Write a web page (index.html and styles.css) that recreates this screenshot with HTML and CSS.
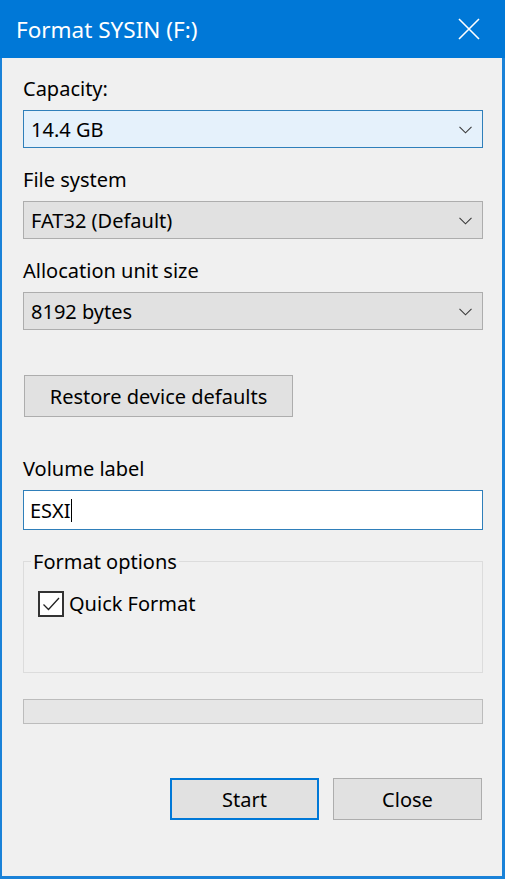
FILE: index.html
```html
<!DOCTYPE html>
<html>
<head>
<meta charset="utf-8">
<link rel="stylesheet" href="styles.css">
</head>
<body>
<div class="window">
  <div class="titlebar">
    <span class="title">Format SYSIN (F:)</span>
    <svg class="close-x" width="22" height="22" viewBox="0 0 22 22"><path d="M1 1 L21 21 M21 1 L1 21" stroke="#fff" stroke-width="1.6" fill="none"/></svg>
  </div>
  <div class="content">
    <div class="field">
      <div class="label">Capacity:</div>
      <div class="combo combo-hot"><span>14.4 GB</span><svg class="chev" width="13" height="8" viewBox="0 0 13 8"><path d="M0.5 0.8 L6.5 6.8 L12.5 0.8" stroke="#3a3a3a" stroke-width="1.1" fill="none"/></svg></div>
    </div>
    <div class="field">
      <div class="label">File system</div>
      <div class="combo"><span>FAT32 (Default)</span><svg class="chev" width="13" height="8" viewBox="0 0 13 8"><path d="M0.5 0.8 L6.5 6.8 L12.5 0.8" stroke="#3a3a3a" stroke-width="1.1" fill="none"/></svg></div>
    </div>
    <div class="field">
      <div class="label">Allocation unit size</div>
      <div class="combo"><span>8192 bytes</span><svg class="chev" width="13" height="8" viewBox="0 0 13 8"><path d="M0.5 0.8 L6.5 6.8 L12.5 0.8" stroke="#3a3a3a" stroke-width="1.1" fill="none"/></svg></div>
    </div>
    <button class="btn restore">Restore device defaults</button>
    <div class="field volume">
      <div class="label">Volume label</div>
      <div class="textbox"><span>ESXI</span><span class="caret"></span></div>
    </div>
    <fieldset class="group">
      <legend>Format options</legend>
      <div class="check">
        <span class="box"><svg width="22" height="22" viewBox="0 0 22 22"><path d="M3.5 11.5 L8.5 16.5 L19 5" stroke="#222" stroke-width="1.3" fill="none"/></svg></span>
        <span>Quick Format</span>
      </div>
    </fieldset>
    <div class="progress"></div>
    <div class="actions">
      <button class="btn primary">Start</button>
      <button class="btn">Close</button>
    </div>
  </div>
</div>
</body>
</html>
```
FILE: styles.css
```css
* { box-sizing: border-box; }
html, body { margin: 0; padding: 0; }
body {
  width: 505px;
  height: 879px;
  font-family: "Noto Sans", "Open Sans", sans-serif;
  font-size: 20px;
  color: #000;
  background: #0078d7;
  overflow: hidden;
}
.window {
  width: 505px;
  height: 879px;
  display: flex;
  flex-direction: column;
}
.titlebar {
  height: 58px;
  flex: none;
  background: #0078d7;
  display: flex;
  align-items: center;
  justify-content: space-between;
  padding: 0 25px 0 16px;
  color: #fff;
}
.title {
  font-size: 22.5px;
  line-height: 30px;
  margin-top: 2px;
}
.close-x { display: block; margin-top: 0px; }
.content {
  flex: 1;
  background: #f0f0f0;
  border-left: 2px solid #1a82d8;
  border-right: 3px solid #1a82d8;
  border-bottom: 3px solid #1a82d8;
  padding: 17px 19px 0 21px;
  display: flex;
  flex-direction: column;
}
.field { display: flex; flex-direction: column; }
.field + .field { margin-top: 18px; }
.label {
  line-height: 27px;
  height: 27px;
  margin-bottom: 8px;
}
.combo {
  height: 38px;
  border: 1px solid #adadad;
  background: #e1e1e1;
  display: flex;
  align-items: center;
  justify-content: space-between;
  padding: 0 10px 0 7px;
  line-height: 27px;
}
.combo-hot {
  background: #e5f1fb;
  border-color: #2f7fba;
}
.chev { display: block; margin-top: 1px; }
.btn {
  font-family: inherit;
  font-size: 20px;
  color: #000;
  background: #e1e1e1;
  border: 1px solid #adadad;
  padding: 0;
  margin: 0;
  line-height: 27px;
}
.restore {
  align-self: flex-start;
  margin-top: 45px;
  margin-left: 1px;
  width: 269px;
  height: 42px;
}
.field.volume { margin-top: 38px; }
.textbox {
  height: 40px;
  border: 1px solid #2f7fba;
  background: #fff;
  display: flex;
  align-items: center;
  padding: 0 0 0 6px;
  line-height: 27px;
}
.caret {
  display: block;
  width: 1px;
  height: 23px;
  background: #000;
  margin-left: 0px;
}
.group {
  margin: 18px 0 0 0;
  padding: 15px 14px 55px 14px;
  border: 1px solid #dcdcdc;
  min-width: 0;
}
.group legend {
  padding: 0 2px;
  margin-left: -7px;
  line-height: 27px;
}
.check {
  display: flex;
  align-items: center;
  height: 27px;
}
.box {
  width: 26px;
  height: 26px;
  border: 2px solid #333;
  background: #fff;
  display: flex;
  align-items: center;
  justify-content: center;
  margin-right: 5px;
}
.box svg { display: block; }
.progress {
  margin-top: 26px;
  height: 25px;
  border: 1px solid #bcbcbc;
  background: #e6e6e6;
}
.actions {
  margin-top: 54px;
  display: flex;
  justify-content: flex-end;
  gap: 14px;
  padding-right: 1px;
}
.actions .btn {
  width: 149px;
  height: 42px;
}
.btn.primary {
  border: 2px solid #0078d7;
}
```
